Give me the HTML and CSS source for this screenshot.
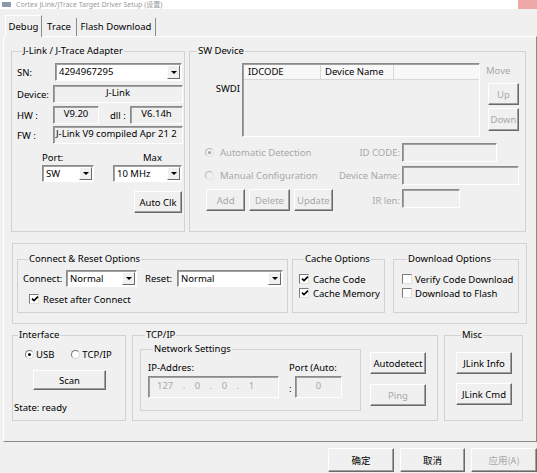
FILE: index.html
```html
<!DOCTYPE html>
<html lang="en">
<head>
    <meta charset="UTF-8">
    <meta name="viewport" content="width=device-width, initial-scale=1.0">
    <title>Cortex JLink/JTrace Target Driver Setup</title>
    <link rel="stylesheet" href="styles.css">
</head>
<body>
    <div class="titlebar">
        <span class="app-icon"></span>
        <span class="title">Cortex JLink/JTrace Target Driver Setup (设置)</span>
        <span class="close"></span>
    </div>

    <div class="tabs">
        <div class="tab active">Debug</div>
        <div class="tab tab-trace">Trace</div>
        <div class="tab tab-flash">Flash Download</div>
    </div>

    <div class="panel">
        <div class="row-top">
            <fieldset class="group adapter">
                <legend>J-Link / J-Trace Adapter</legend>
                <div class="line">
                    <span class="lbl sn-lbl">SN:</span>
                    <div class="combo sn-combo"><span class="val">4294967295</span><span class="drop"></span></div>
                </div>
                <div class="line dev-line">
                    <span class="lbl">Device:</span>
                    <div class="ro ro-wide center">J-Link</div>
                </div>
                <div class="line hw-line">
                    <span class="lbl">HW :</span>
                    <div class="ro ro-hw center">V9.20</div>
                    <span class="lbl dll-lbl">dll :</span>
                    <div class="ro ro-dll center">V6.14h</div>
                </div>
                <div class="line fw-line">
                    <span class="lbl">FW :</span>
                    <div class="ro ro-wide">J-Link V9 compiled Apr 21 2</div>
                </div>
                <div class="clock">
                    <div class="clock-col port-col">
                        <span class="clock-lbl">Port:</span>
                        <div class="combo"><span class="val">SW</span><span class="drop"></span></div>
                    </div>
                    <div class="clock-col max-col">
                        <span class="clock-lbl">Max</span>
                        <div class="combo"><span class="val">10 MHz</span><span class="drop"></span></div>
                    </div>
                </div>
                <button class="btn auto-clk">Auto Clk</button>
            </fieldset>

            <fieldset class="group sw-device">
                <legend>SW Device</legend>
                <div class="sw-top">
                    <span class="swdi">SWDI</span>
                    <div class="list">
                        <div class="list-head">
                            <span class="col col-id">IDCODE</span>
                            <span class="col col-name">Device Name</span>
                        </div>
                    </div>
                    <div class="move">
                        <span class="move-lbl">Move</span>
                        <button class="btn off up-btn">Up</button>
                        <button class="btn off down-btn">Down</button>
                    </div>
                </div>
                <div class="sw-grid">
                    <div class="opt off"><span class="radio off on"></span>Automatic Detection</div>
                    <span class="sw-lbl">ID CODE:</span>
                    <div class="sw-field f-id"></div>

                    <div class="opt off"><span class="radio off"></span>Manual Configuration</div>
                    <span class="sw-lbl">Device Name:</span>
                    <div class="sw-field f-name"></div>

                    <div class="sw-btns">
                        <button class="btn off b-add">Add</button>
                        <button class="btn off b-del">Delete</button>
                        <button class="btn off b-upd">Update</button>
                    </div>
                    <span class="sw-lbl">IR len:</span>
                    <div class="sw-field f-ir"></div>
                </div>
            </fieldset>
        </div>

        <div class="opts">
            <fieldset class="group connect">
                <legend>Connect &amp; Reset Options</legend>
                <div class="conn-line">
                    <span class="conn-lbl">Connect:</span>
                    <div class="combo c-conn"><span class="val">Normal</span><span class="drop"></span></div>
                    <span class="reset-lbl">Reset:</span>
                    <div class="combo c-reset"><span class="val">Normal</span><span class="drop"></span></div>
                </div>
                <div class="check-line reset-check">
                    <span class="chk"><svg viewBox="0 0 8 8"><path d="M1 3.6 L3 5.6 L7 1.6"/></svg></span>
                    <span class="chk-text">Reset after Connect</span>
                </div>
            </fieldset>

            <fieldset class="group cache">
                <legend>Cache Options</legend>
                <div class="check-line">
                    <span class="chk"><svg viewBox="0 0 8 8"><path d="M1 3.6 L3 5.6 L7 1.6"/></svg></span>
                    <span class="chk-text">Cache Code</span>
                </div>
                <div class="check-line second">
                    <span class="chk"><svg viewBox="0 0 8 8"><path d="M1 3.6 L3 5.6 L7 1.6"/></svg></span>
                    <span class="chk-text">Cache Memory</span>
                </div>
            </fieldset>

            <fieldset class="group download">
                <legend>Download Options</legend>
                <div class="check-line">
                    <span class="chk"></span>
                    <span class="chk-text narrow">Verify Code Download</span>
                </div>
                <div class="check-line second">
                    <span class="chk"></span>
                    <span class="chk-text narrow">Download to Flash</span>
                </div>
            </fieldset>
        </div>

        <div class="bottom-row">
            <fieldset class="group iface">
                <legend>Interface</legend>
                <div class="iface-radios">
                    <span class="radio on"></span><span>USB</span>
                    <span class="radio tcp-radio"></span><span>TCP/IP</span>
                </div>
                <button class="btn scan">Scan</button>
                <div class="state">State: ready</div>
            </fieldset>

            <fieldset class="group tcpip">
                <legend>TCP/IP</legend>
                <div class="tcp-inner">
                    <fieldset class="group net">
                        <legend>Network Settings</legend>
                        <div class="net-inner">
                            <div class="ip-col">
                                <span class="small-lbl">IP-Addres:</span>
                                <div class="ip-field">127 . 0 . 0 . 1</div>
                            </div>
                            <div class="port-col2">
                                <span class="small-lbl">Port (Auto:</span>
                                <div class="port-line">
                                    <span class="colon">:</span>
                                    <div class="port-field">0</div>
                                </div>
                            </div>
                        </div>
                    </fieldset>
                    <div class="tcp-btns">
                        <button class="btn b-auto">Autodetect</button>
                        <button class="btn off b-ping">Ping</button>
                    </div>
                </div>
            </fieldset>

            <fieldset class="group misc">
                <legend>Misc</legend>
                <button class="btn b-info">JLink Info</button>
                <button class="btn b-cmd">JLink Cmd</button>
            </fieldset>
        </div>
    </div>

    <div class="dlg-btns">
        <button class="btn cjk b-ok">确定</button>
        <button class="btn cjk b-cancel">取消</button>
        <button class="btn cjk off b-apply">应用(A)</button>
    </div>
</body>
</html>
```

FILE: styles.css
```css
* {
    box-sizing: border-box;
}

body {
    margin: 0;
    width: 537px;
    height: 473px;
    overflow: hidden;
    background: #f0f0f0;
    font-family: "Noto Sans", "Noto Sans CJK SC", sans-serif;
    font-size: 9.5px;
    color: #000;
}

/* title bar, squeezed to the top edge */
.titlebar {
    display: flex;
    align-items: center;
    height: 9px;
    background: #fff;
}

.app-icon {
    width: 9px;
    height: 5px;
    margin: 0 5px 0 2px;
    background: #8c99aa;
}

.title {
    font-size: 7px;
    line-height: 9px;
    color: #9a9a9a;
    white-space: nowrap;
}

.close {
    align-self: stretch;
    width: 19px;
    margin-left: auto;
    background: #efa6a6;
}

/* tabs */
.tabs {
    display: flex;
    height: 21px;
    margin: 6px 0 0 5px;
    position: relative;
    z-index: 1;
}

.tab {
    height: 18px;
    margin-top: 3px;
    line-height: 17px;
    text-align: center;
    border-right: 1px solid #8a8a8a;
}

.tab.active {
    width: 37px;
    height: 22px;
    margin-top: 0;
    line-height: 21px;
    background: #f0f0f0;
    border-top: 1px solid #fff;
    border-left: 1px solid #fff;
}

.tab-trace {
    width: 35px;
}

.tab-flash {
    width: 79px;
}

.panel {
    width: 534px;
    height: 406px;
    margin-left: 3px;
    padding: 8px 0 0 7px;
    border: 1px solid;
    border-color: #fff #8a8a8a #8a8a8a #fff;
}

/* shared controls */
.group {
    margin: 0;
    padding: 0;
    min-width: 0;
    border: 1px solid #d2d2d2;
}

.group legend {
    margin-left: 5px;
    padding: 0 1px;
    line-height: 12px;
}

.btn {
    display: block;
    padding: 0;
    font: inherit;
    color: #000;
    background: #f0f0f0;
    border: 1px solid;
    border-color: #fff #696969 #696969 #fff;
    box-shadow: inset -1px -1px #a0a0a0;
}

.btn.off {
    color: #a8a8a8;
}

.combo {
    display: flex;
    height: 17px;
    padding: 1px;
    background: #fff;
    border: 1px solid;
    border-color: #8a8a8a #fff #fff #8a8a8a;
    box-shadow: inset 1px 1px #a0a0a0;
}

.combo .val {
    flex: 1;
    padding-left: 2px;
    line-height: 13px;
    white-space: nowrap;
}

.combo .drop {
    display: flex;
    align-items: center;
    justify-content: center;
    width: 13px;
    background: #f0f0f0;
    border: 1px solid;
    border-color: #fff #696969 #696969 #fff;
}

.combo .drop::after {
    content: "";
    border-left: 3px solid transparent;
    border-right: 3px solid transparent;
    border-top: 3px solid #000;
}

.ro {
    height: 18px;
    padding: 0 2px;
    line-height: 14px;
    white-space: nowrap;
    overflow: hidden;
    background: #f0f0f0;
    border: 1px solid;
    border-color: #8a8a8a #fff #fff #8a8a8a;
    box-shadow: inset 1px 1px #a0a0a0;
}

.center {
    text-align: center;
}

.radio {
    flex: none;
    width: 9px;
    height: 9px;
    display: flex;
    align-items: center;
    justify-content: center;
    border-radius: 50%;
    background: #fff;
    border: 1px solid;
    border-color: #7a7a7a #d8d8d8 #d8d8d8 #7a7a7a;
}

.radio.on::after {
    content: "";
    width: 3px;
    height: 3px;
    border-radius: 50%;
    background: #000;
}

.radio.off {
    background: #f0f0f0;
    border-color: #b8b8b8 #e4e4e4 #e4e4e4 #b8b8b8;
}

.radio.off.on::after {
    background: #a0a0a0;
}

.chk {
    flex: none;
    width: 10px;
    height: 10px;
    padding: 0 0 0 1px;
    background: #fff;
    border: 1px solid;
    border-color: #7a7a7a #e0e0e0 #e0e0e0 #7a7a7a;
}

.chk svg {
    display: block;
    width: 8px;
    height: 8px;
}

.chk path {
    fill: none;
    stroke: #000;
    stroke-width: 1.6;
}

/* adapter group */
.row-top {
    display: flex;
    gap: 4px;
    height: 187px;
}

.adapter {
    width: 174px;
    height: 187px;
    padding: 6px 0 0 5px;
}

.line {
    display: flex;
    align-items: center;
    height: 18px;
}

.lbl {
    flex: none;
    width: 36px;
    white-space: nowrap;
}

.sn-lbl {
    width: 38px;
}

.sn-combo {
    width: 127px;
    height: 18px;
}

.dev-line {
    margin-top: 4px;
}

.hw-line {
    margin-top: 3px;
}

.fw-line {
    margin-top: 2px;
}

.ro-wide {
    width: 130px;
}

.ro-hw {
    width: 46px;
}

.dll-lbl {
    width: 20px;
    margin-left: 11px;
}

.ro-dll {
    width: 53px;
}

.clock {
    display: flex;
    margin-top: 8px;
}

.clock-col {
    display: flex;
    flex-direction: column;
}

.clock-lbl {
    margin-bottom: 2px;
    line-height: 11px;
}

.port-col {
    width: 52px;
    margin-left: 25px;
}

.max-col {
    width: 69px;
    margin-left: 19px;
}

.max-col .clock-lbl {
    padding-left: 30px;
}

.auto-clk {
    width: 48px;
    height: 22px;
    margin: 9px 2px 0 auto;
}

/* SW device group */
.sw-device {
    width: 337px;
    height: 187px;
    padding: 6px 0 0 0;
}

.sw-device legend {
    margin-left: 7px;
}

.sw-top {
    display: flex;
}

.swdi {
    flex: none;
    width: 52px;
    padding: 20px 2px 0 0;
    text-align: right;
    line-height: 11px;
}

.list {
    width: 238px;
    height: 74px;
    padding: 1px 0 0 1px;
    background: #f0f0f0;
    border: 1px solid;
    border-color: #8a8a8a #fff #fff #8a8a8a;
    box-shadow: inset 1px 1px #a0a0a0;
}

.list-head {
    display: flex;
    height: 15px;
    background: #f8f8f8;
    border-bottom: 1px solid #d8d8d8;
}

.col {
    padding-left: 4px;
    line-height: 14px;
    border-right: 1px solid #d8d8d8;
}

.col-id {
    width: 77px;
}

.col-name {
    width: 73px;
}

.move {
    display: flex;
    flex-direction: column;
    width: 33px;
    margin-left: 6px;
}

.move-lbl {
    margin-top: 2px;
    line-height: 11px;
    color: #a8a8a8;
}

.move .btn {
    width: 31px;
    margin-left: 2px;
}

.up-btn {
    height: 22px;
    margin-top: 7px;
}

.down-btn {
    height: 23px;
    margin-top: 3px;
}

.sw-grid {
    display: grid;
    grid-template-columns: 128px 65px auto;
    grid-template-rows: 19px 19px 22px;
    row-gap: 4px;
    column-gap: 2px;
    margin: 6px 0 0 15px;
}

.opt {
    display: flex;
    align-items: center;
    white-space: nowrap;
    color: #a8a8a8;
}

.opt .radio {
    margin-right: 6px;
}

.sw-lbl {
    align-self: center;
    text-align: right;
    white-space: nowrap;
    color: #a8a8a8;
}

.sw-field {
    background: #f0f0f0;
    border: 1px solid;
    border-color: #8a8a8a #fff #fff #8a8a8a;
    box-shadow: inset 1px 1px #a0a0a0;
}

.f-id {
    width: 95px;
}

.f-name {
    width: 117px;
}

.f-ir {
    width: 58px;
    height: 19px;
}

.sw-btns {
    display: flex;
    gap: 4px;
    margin-left: 1px;
}

.b-add {
    width: 43px;
}

.b-del {
    width: 44px;
}

.b-upd {
    width: 43px;
}

/* connect / cache / download */
.opts {
    display: flex;
    width: 515px;
    height: 81px;
    margin: 11px 0 0 1px;
    padding: 9px 0 0 4px;
    border: 1px solid #d2d2d2;
}

.connect {
    width: 271px;
    height: 60px;
    padding: 5px 0 0 5px;
}

.conn-line {
    display: flex;
    align-items: center;
    height: 17px;
}

.conn-lbl {
    width: 43px;
}

.c-conn {
    width: 71px;
}

.reset-lbl {
    width: 32px;
    margin-left: 8px;
}

.c-reset {
    width: 106px;
}

.check-line {
    display: flex;
    align-items: center;
    height: 12px;
}

.check-line.second {
    margin-top: 2px;
}

.chk-text {
    margin-left: 4px;
    white-space: nowrap;
}

.chk-text.narrow {
    margin-left: 3px;
}

.reset-check {
    margin: 6px 0 0 6px;
}

.cache {
    width: 93px;
    height: 60px;
    margin-left: 4px;
    padding: 8px 0 0 6px;
}

.download {
    width: 126px;
    height: 60px;
    margin-left: 8px;
    padding: 8px 0 0 8px;
}

/* interface / tcp / misc */
.bottom-row {
    display: flex;
    height: 92px;
    margin: 5px 0 0 1px;
}

.iface {
    width: 114px;
    height: 92px;
    padding: 7px 0 0 0;
}

.iface-radios {
    display: flex;
    align-items: center;
    height: 12px;
    margin-left: 12px;
}

.iface-radios .radio {
    margin-right: 2px;
}

.iface-radios .tcp-radio {
    margin-left: 17px;
}

.scan {
    width: 73px;
    height: 20px;
    margin: 10px 0 0 20px;
}

.state {
    margin: 12px 0 0 1px;
    line-height: 11px;
}

.tcpip {
    width: 306px;
    height: 92px;
    margin-left: 6px;
    padding: 0 0 0 7px;
}

.tcp-inner {
    display: flex;
}

.net {
    width: 221px;
    height: 68px;
    margin-top: 2px;
    padding: 7px 0 0 7px;
}

.net-inner {
    display: flex;
}

.small-lbl {
    display: block;
    line-height: 11px;
}

.ip-col {
    width: 131px;
}

.ip-field {
    height: 22px;
    margin-top: 3px;
    padding: 2px 0 0 8px;
    line-height: 13px;
    word-spacing: 7px;
    color: #a8a8a8;
    background: #f0f0f0;
    border: 1px solid;
    border-color: #8a8a8a #fff #fff #8a8a8a;
    box-shadow: inset 1px 1px #a0a0a0;
}

.port-col2 {
    margin-left: 10px;
}

.port-line {
    display: flex;
    margin-top: 3px;
}

.colon {
    width: 6px;
    padding-top: 6px;
}

.port-field {
    width: 47px;
    height: 22px;
    padding-top: 2px;
    line-height: 13px;
    text-align: center;
    color: #a8a8a8;
    background: #f0f0f0;
    border: 1px solid;
    border-color: #8a8a8a #fff #fff #8a8a8a;
    box-shadow: inset 1px 1px #a0a0a0;
}

.tcp-btns {
    margin-left: 9px;
}

.tcp-btns .btn,
.misc .btn {
    width: 56px;
    height: 22px;
}

.b-auto {
    margin-top: 11px;
}

.b-ping {
    margin-top: 10px;
}

.misc {
    width: 79px;
    height: 92px;
    margin-left: 6px;
    padding: 0 0 0 11px;
}

.b-info {
    margin-top: 11px;
}

.b-cmd {
    margin-top: 9px;
}

/* dialog buttons */
.dlg-btns {
    display: flex;
    justify-content: flex-end;
    gap: 6px;
    margin-top: 6px;
}

.dlg-btns .btn {
    height: 24px;
}

.cjk {
    font-family: "Noto Sans CJK SC", sans-serif;
}

.b-ok,
.b-apply {
    width: 66px;
}

.b-cancel {
    width: 65px;
}
```
